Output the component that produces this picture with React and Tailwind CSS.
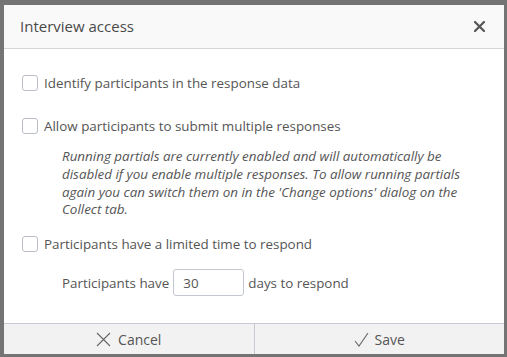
import React from "react";

const Checkbox = () => (
  <span className="inline-block w-[16px] h-[16px] rounded-[3px] border border-[#b9bec6] bg-white shrink-0" />
);

const App = () => {
  return (
    <div className="w-[507px] h-[357px] bg-[#747474] pt-[5px] pl-[4px] font-['Open_Sans','Lato',sans-serif] text-[#555]">
      <div className="w-[500px] h-[349px] bg-white flex flex-col">
        {/* Header */}
        <div className="h-[44px] bg-[#f9f9f9] border-b border-[#d6d6d6] flex items-center justify-between pl-[16px] pr-[19px]">
          <span className="text-[15px] text-[#4a4a4a]">Interview access</span>
          <svg width="11" height="11" viewBox="0 0 11 11">
            <path d="M1 1L10 10M10 1L1 10" stroke="#555" strokeWidth="2.2" strokeLinecap="round" />
          </svg>
        </div>

        {/* Body */}
        <div className="flex-1 pl-[18px] pr-[38px] text-[13.4px]">
          <label className="flex items-center gap-[6px] mt-[25px] leading-[18px]">
            <Checkbox />
            <span>Identify participants in the response data</span>
          </label>
          <label className="flex items-center gap-[6px] mt-[25px] leading-[18px]">
            <Checkbox />
            <span>Allow participants to submit multiple responses</span>
          </label>
          <p className="italic pl-[40px] mt-[13px] leading-[17.8px]">
            Running partials are currently enabled and will automatically be disabled if you enable multiple
            responses. To allow running partials again you can switch them on in the 'Change options' dialog on the
            Collect tab.
          </p>
          <label className="flex items-center gap-[6px] mt-[16px] leading-[18px]">
            <Checkbox />
            <span>Participants have a limited time to respond</span>
          </label>
          <div className="flex items-center pl-[40px] mt-[16px]">
            <span>Participants have</span>
            <input
              defaultValue="30"
              className="w-[71px] h-[27px] mx-[4px] border border-[#c3c8d0] rounded-[3px] px-[9px] text-[#555] outline-none"
            />
            <span>days to respond</span>
          </div>
        </div>

        {/* Footer */}
        <div className="h-[31px] bg-[#f2f2f2] border-t border-[#c8cbd6] flex text-[14px] text-[#555]">
          <button className="flex-1 flex items-center justify-center gap-[7px] border-r border-[#c8cbd6]">
            <svg width="15" height="15" viewBox="0 0 15 15">
              <path d="M1 1L14 14M14 1L1 14" stroke="#666" strokeWidth="1.1" />
            </svg>
            <span>Cancel</span>
          </button>
          <button className="flex-1 flex items-center justify-center gap-[6px]">
            <svg width="15" height="15" viewBox="0 0 15 15">
              <path d="M1 9L5 14L14 1" stroke="#666" strokeWidth="1.1" fill="none" />
            </svg>
            <span>Save</span>
          </button>
        </div>
      </div>
    </div>
  );
};

export default App;
